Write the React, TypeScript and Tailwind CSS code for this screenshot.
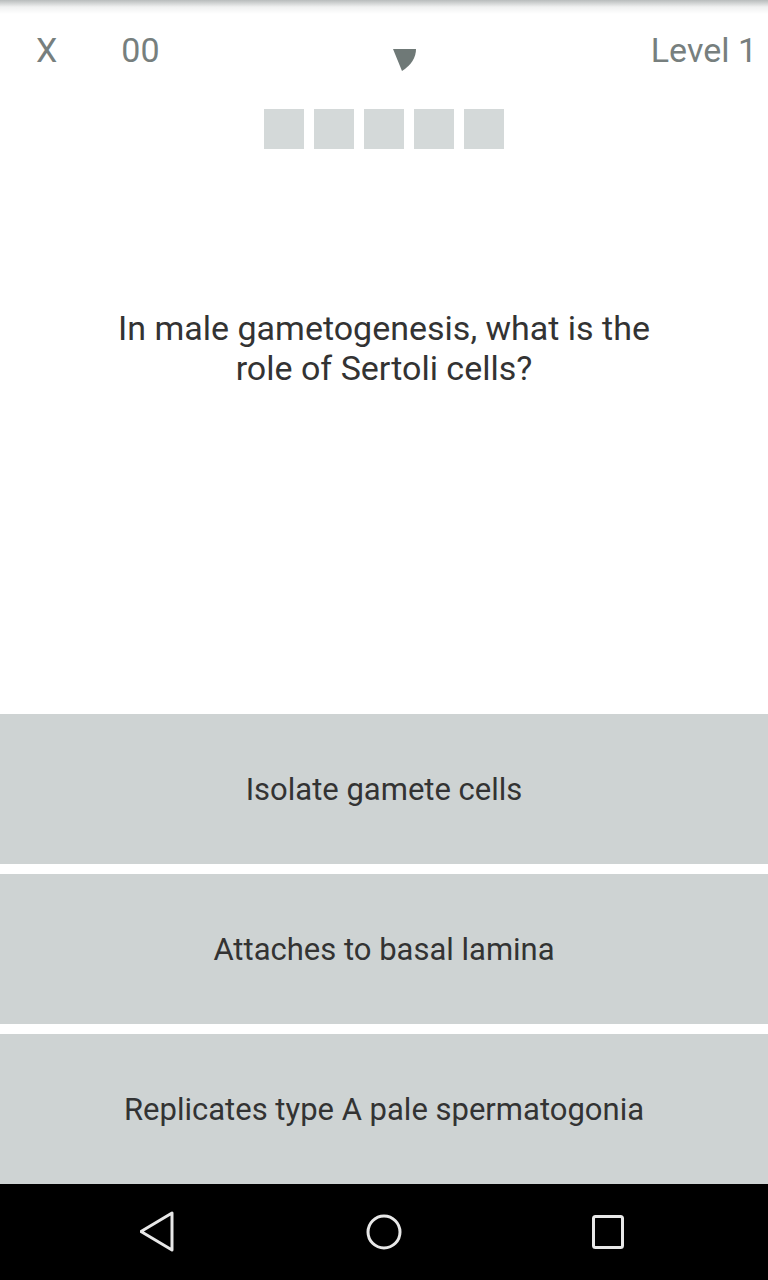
import React from 'react';

const answers = ['Isolate gamete cells', 'Attaches to basal lamina', 'Replicates type A pale spermatogonia'];

const App: React.FC = () => {
  return (
    <div className="w-[768px] h-[1280px] bg-white flex flex-col overflow-hidden" style={{ fontFamily: 'Roboto, "Liberation Sans", sans-serif' }}>
      <div className="h-[14px] bg-gradient-to-b from-[#b8bcbc] via-[#f0f1f1] to-white shrink-0" />

      {/* header */}
      <div className="relative h-[72px] flex items-center text-[#777f7e] text-[34px] leading-none">
        <span className="ml-[36px]">X</span>
        <span className="ml-[64px]">00</span>
        <svg className="absolute left-[392px] top-[34px]" width="26" height="24" viewBox="0 0 26 24">
          <path d="M1 1 L24 1 Q24 14 10 23 Z" fill="#6f7977" />
        </svg>
        <span className="ml-auto mr-[11px]">Level 1</span>
      </div>

      {/* progress boxes */}
      <div className="flex justify-center gap-[10px] mt-[23px]">
        {[0, 1, 2, 3, 4].map(i => (
          <div key={i} className="w-[40px] h-[40px] bg-[#d4d9d9]" />
        ))}
      </div>

      {/* question */}
      <div className="flex-1 flex items-start justify-center pt-[159px]">
        <p className="text-[34px] leading-[40px] text-[#333333] text-center w-[570px]">
          In male gametogenesis, what is the role of Sertoli cells?
        </p>
      </div>

      {/* answers */}
      <div className="flex flex-col gap-[10px]">
        {answers.map(a => (
          <div key={a} className="h-[150px] bg-[#ced3d3] flex items-center justify-center text-[31px] text-[#333333] pt-[2px]">
            {a}
          </div>
        ))}
      </div>

      {/* nav bar */}
      <div className="h-[96px] bg-black flex items-center justify-center shrink-0">
        <div className="w-[224px] flex justify-center">
          <svg width="40" height="42" viewBox="0 0 40 42">
            <path d="M35 2 L35 39 L4 20.5 Z" fill="none" stroke="#e8e8e8" strokeWidth="3" strokeLinejoin="round" transform="translate(-3 0)" />
          </svg>
        </div>
        <div className="w-[224px] flex justify-center">
          <svg width="40" height="40" viewBox="0 0 40 40">
            <circle cx="20" cy="20" r="16" fill="none" stroke="#e8e8e8" strokeWidth="3" />
          </svg>
        </div>
        <div className="w-[224px] flex justify-center">
          <svg width="40" height="40" viewBox="0 0 40 40">
            <rect x="5.5" y="4.5" width="29" height="31" rx="2" fill="none" stroke="#e8e8e8" strokeWidth="3" />
          </svg>
        </div>
      </div>
    </div>
  );
};

export default App;
